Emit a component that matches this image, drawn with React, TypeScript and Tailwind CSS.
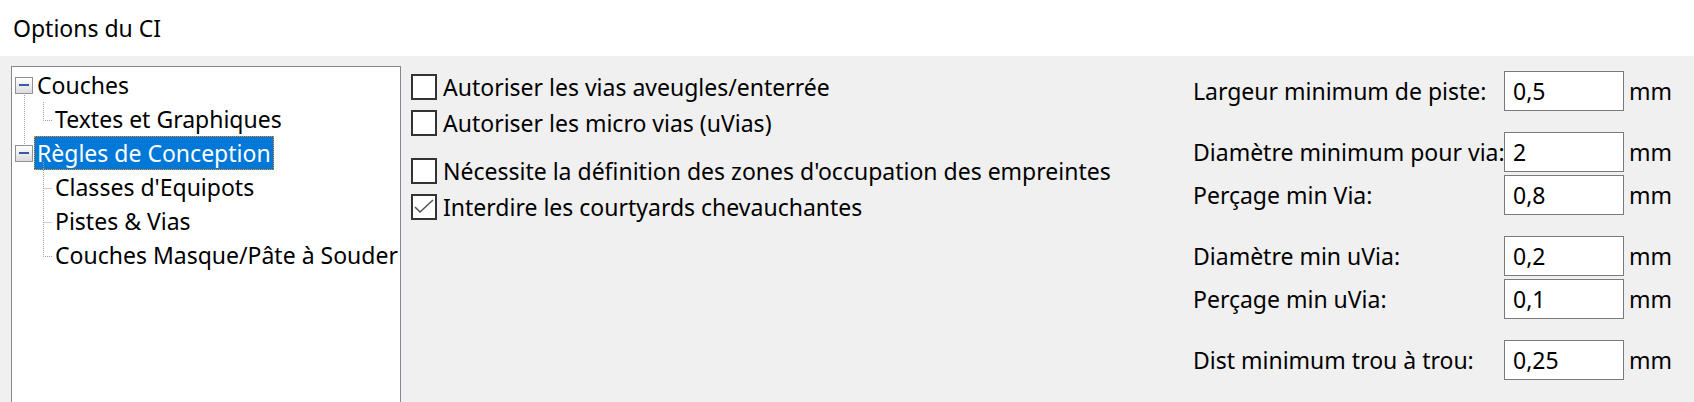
import { ReactNode } from 'react'

const font = { fontFamily: '"Noto Sans", "Open Sans", sans-serif' }

function Expander() {
  return (
    <span className="flex h-[17px] w-[18px] shrink-0 items-center justify-center border border-[#919191] bg-gradient-to-b from-white to-[#dcdcdc]">
      <span className="h-[2px] w-[10px] bg-[#3c5aa8]" />
    </span>
  )
}

function TreeRow({
  level,
  selected,
  children,
}: {
  level: 0 | 1
  selected?: boolean
  children: ReactNode
}) {
  return (
    <div
      className={
        level === 0
          ? 'flex h-[34px] items-center whitespace-nowrap pl-[3px]'
          : 'flex h-[34px] items-center whitespace-nowrap pl-[40px]'
      }
    >
      {level === 0 && <Expander />}
      <span
        className={
          selected
            ? 'ml-[1px] flex h-[34px] items-center border border-dotted border-[#ff8c00] bg-[#0078d7] px-[2px] text-white'
            : level === 0
              ? 'ml-[1px] px-[3px]'
              : 'px-[3px]'
        }
      >
        {children}
      </span>
    </div>
  )
}

function TreeLines() {
  return (
    <svg
      className="pointer-events-none absolute left-0 top-0"
      width="60"
      height="200"
      stroke="#a0a0a0"
      strokeDasharray="1 1"
      fill="none"
    >
      <path d="M12.5 28V80" />
      <path d="M31.5 35V53.5H40" />
      <path d="M31.5 95V189.5H40M31.5 121.5H40M31.5 155.5H40" />
    </svg>
  )
}

function Check({ checked, children }: { checked?: boolean; children: ReactNode }) {
  return (
    <div className="flex h-[36px] items-center whitespace-nowrap">
      <span className="flex h-[26px] w-[26px] shrink-0 items-center justify-center border-2 border-[#333] bg-white">
        {checked && (
          <svg width="22" height="22" viewBox="0 0 22 22" fill="none">
            <path d="M2 11L7 16L20 4" stroke="#555" strokeWidth="1.6" />
          </svg>
        )}
      </span>
      <span className="ml-[6px] text-[23px] text-black">{children}</span>
    </div>
  )
}

function Field({ label, value, className }: { label: string; value: string; className?: string }) {
  return (
    <div className={`flex h-[40px] items-center whitespace-nowrap ${className ?? ''}`}>
      <span className="w-[311px] shrink-0 text-[23px]">{label}</span>
      <span className="flex h-[40px] w-[120px] shrink-0 items-center border border-[#7a7a7a] bg-white pl-[8px] text-[23px]">
        {value}
      </span>
      <span className="ml-[5px] text-[23px]">mm</span>
    </div>
  )
}

export default function App() {
  return (
    <div className="h-[402px] w-[1694px] overflow-hidden bg-[#f0f0f0] text-black" style={font}>
      <div className="flex h-[56px] items-center bg-white pl-[13px] text-[23px]">Options du CI</div>
      <div className="flex pt-[10px]">
        <div className="relative ml-[11px] h-[360px] w-[390px] shrink-0 overflow-hidden border border-[#828790] bg-white pt-[1px] text-[23px]">
          <TreeLines />
          <TreeRow level={0}>Couches</TreeRow>
          <TreeRow level={1}>Textes et Graphiques</TreeRow>
          <TreeRow level={0} selected>
            Règles de Conception
          </TreeRow>
          <TreeRow level={1}>Classes d'Equipots</TreeRow>
          <TreeRow level={1}>Pistes &amp; Vias</TreeRow>
          <TreeRow level={1}>Couches Masque/Pâte à Souder</TreeRow>
        </div>
        <div className="w-[792px] shrink-0 pl-[10px] pt-[3px]">
          <Check>Autoriser les vias aveugles/enterrée</Check>
          <Check>Autoriser les micro vias (uVias)</Check>
          <div className="mt-[12px]">
            <Check>Nécessite la définition des zones d'occupation des empreintes</Check>
            <Check checked>Interdire les courtyards chevauchantes</Check>
          </div>
        </div>
        <div className="pt-[5px]">
          <Field label="Largeur minimum de piste:" value="0,5" />
          <Field label="Diamètre minimum pour via:" value="2" className="mt-[21px]" />
          <Field label="Perçage min Via:" value="0,8" className="mt-[3px]" />
          <Field label="Diamètre min uVia:" value="0,2" className="mt-[21px]" />
          <Field label="Perçage min uVia:" value="0,1" className="mt-[3px]" />
          <Field label="Dist minimum trou à trou:" value="0,25" className="mt-[21px]" />
        </div>
      </div>
    </div>
  )
}
